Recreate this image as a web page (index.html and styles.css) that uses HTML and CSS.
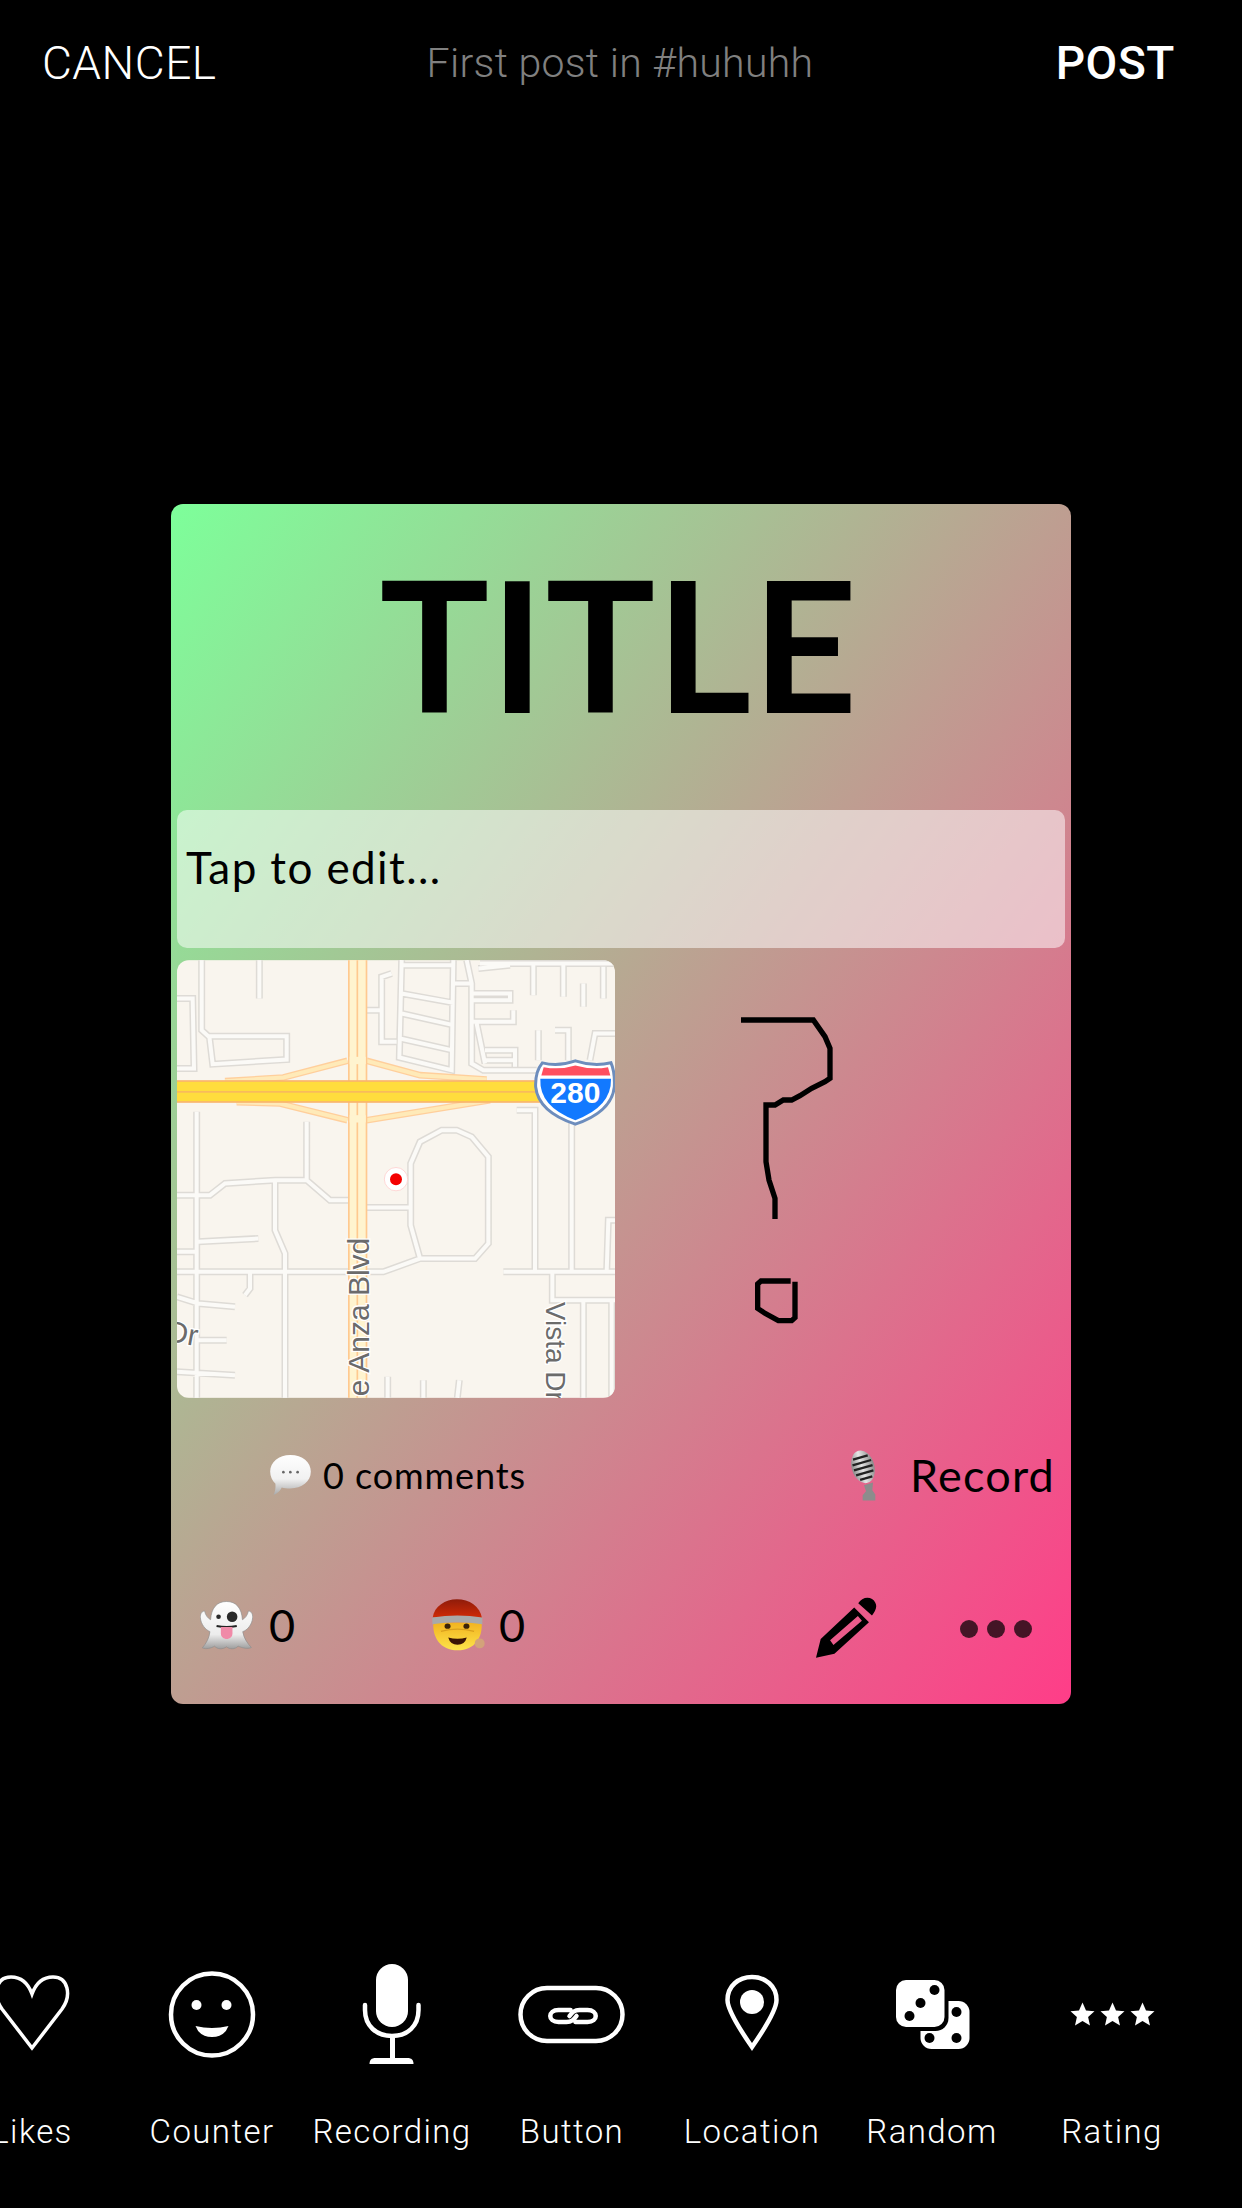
FILE: index.html
```html
<!DOCTYPE html>
<html lang="en">
<head>
<meta charset="utf-8">
<title>First post</title>
<link rel="stylesheet" href="styles.css">
</head>
<body>
<header class="topbar">
  <span class="cancel">CANCEL</span>
  <span class="context">First post in #huhuhh</span>
  <span class="post">POST</span>
</header>

<main class="card">
  <h1 class="title">TITLE</h1>
  <div class="textbox">Tap to edit...</div>

  <div class="media">
    <svg class="map" viewBox="21 30 1314 1313" aria-label="Map">
      <defs>
        <path id="streets" d="M21 145H68L72 355H21M95 30V240L115 258H350V328L128 342L118 258M268 30V145M665 70L635 80V275H680M590 180H635M695 30L688 322L845 360L850 30M695 45H850M695 130L850 158M695 190L850 225M690 265L845 300M850 100H905M890 30L905 100V340L940 360H1100M925 55L1020 45M930 40H1335M1090 40V135M1180 40V140M1300 50V145M1240 100V170M905 130H1020V150H905M905 215H1030V180M920 220L945 340M945 300H1035V350M945 330H1035M1105 240V330M1155 240H1195V330M1260 330L1275 250H1335M80 485V1343M410 515V690L480 750H535M21 735H120L165 700L315 690H410M315 690V840L345 910V1343M85 875L265 865M21 905H85M21 965H640L750 925H915L955 880V620L905 560L860 540H815L750 575L722 640V825L750 925M590 772H725M240 965V1015L225 1035M21 1040L85 1060L195 1070M85 1170H170M21 1265L195 1275M1000 965H1335M1040 480H1095V965M1205 500V965M1335 810H1315L1310 965M1147 965V1050H1335M1240 1050V1343M1325 1050V1343M653 1280V1343M760 1290V1343M868 1290L862 1343"/>
        <path id="ramps" d="M165 393L340 382L532 332M590 332L750 375L950 388M200 456L330 460L532 510M590 510L960 450"/>
      </defs>
      <rect class="map-ground" x="21" y="30" width="1314" height="1313"/>
      <use href="#streets" class="street-edge"/>
      <use href="#streets" class="street-fill"/>
      <use href="#ramps" class="ramp-edge"/>
      <use href="#ramps" class="ramp-fill"/>
      <rect class="artery-edge" x="534" y="30" width="58" height="1313"/>
      <rect class="artery-fill" x="539" y="30" width="48" height="1313"/>
      <path class="artery-line" d="M562 30V1343"/>
      <rect class="highway-edge" x="21" y="390" width="1090" height="68"/>
      <rect class="highway-fill" x="21" y="395" width="1090" height="58"/>
      <path class="highway-line" d="M21 425H1110"/>
      <rect class="artery-fill" x="539" y="320" width="48" height="22"/>
      <rect class="artery-fill" x="539" y="495" width="48" height="22"/>
      <circle class="pin-halo" cx="678" cy="687" r="35"/>
      <circle class="pin-dot" cx="678" cy="687" r="18"/>
      <text class="map-label" transform="translate(598 1338) rotate(-90)">e Anza Blvd</text>
      <text class="map-label map-label-small" transform="translate(1128 1055) rotate(90)">Vista Dr</text>
      <text class="map-label" transform="translate(-15 1172) rotate(10)">Dr</text>
      <path class="shield-edge" d="M1117 338Q1165 350 1216 332Q1270 350 1323 338Q1335 365 1333 410Q1325 485 1216 522Q1105 485 1097 410Q1095 365 1117 338Z"/>
      <path class="shield-blue" d="M1111 386H1323Q1325 470 1216 510Q1107 470 1111 386Z"/>
      <path class="shield-red" d="M1121 351Q1170 360 1216 346Q1265 360 1314 351L1321 376H1114Z"/>
      <text class="shield-num" x="1216" y="460">280</text>
    </svg>

    <svg class="scribble" viewBox="-255 -60 1350 1314" aria-label="Drawing">
      <path d="M123 120H340L375 170L390 205V295L375 305L335 325L300 347L275 360H250L225 375H198V545L207 600L225 655V717"/>
      <path d="M272 903H183L173 912V985L195 1000L235 1022H275L285 1013V905"/>
    </svg>
  </div>

  <div class="actions">
    <div class="comments">
      <svg class="emoji-bubble" viewBox="300 105 123 121">
        <defs>
          <linearGradient id="bubbleShade" x1="0" y1="0" x2="0" y2="1">
            <stop offset="0" stop-color="#ffffff"/><stop offset=".6" stop-color="#f1f1f1"/><stop offset="1" stop-color="#a9a9a9"/>
          </linearGradient>
        </defs>
        <path fill="url(#bubbleShade)" d="M361 105C398 105 423 127 423 155C423 186 395 206 361 206C350 206 342 205 335 203C330 213 322 222 310 226C315 216 317 206 316 192C306 183 300 170 300 155C300 127 326 105 361 105Z"/>
        <circle class="bubble-dot" cx="340" cy="157" r="4"/><circle class="bubble-dot" cx="361" cy="157" r="4"/><circle class="bubble-dot" cx="383" cy="157" r="4"/>
      </svg>
      <span class="comment-text">0 comments</span>
    </div>
    <div class="record">
      <svg class="emoji-mic" viewBox="213 85 87 152">
        <defs>
          <linearGradient id="micMetal" x1="0" y1="0" x2="1" y2="0">
            <stop offset="0" stop-color="#8a8a8a"/><stop offset=".45" stop-color="#e6e6e6"/><stop offset="1" stop-color="#8a8a8a"/>
          </linearGradient>
        </defs>
        <path fill="#8c8c8c" d="M258 190L285 182L283 205L292 218V236H254V220L264 208Z"/>
        <g transform="rotate(-16 255 135)">
          <ellipse fill="url(#micMetal)" cx="255" cy="135" rx="34" ry="50"/>
          <path class="mic-bars" d="M232 106H278M226 122H284M226 138H284M228 154H282M236 170H274"/>
        </g>
      </svg>
      <span class="record-text">Record</span>
    </div>
  </div>

  <div class="footer">
    <svg class="emoji-ghost" viewBox="90 540 160 147">
      <defs>
        <linearGradient id="ghostShade" x1="0" y1="0" x2="0" y2="1">
          <stop offset="0" stop-color="#ffffff"/><stop offset=".7" stop-color="#ececec"/><stop offset="1" stop-color="#9e9e9e"/>
        </linearGradient>
      </defs>
      <path fill="url(#ghostShade)" stroke="#8d8d8d" stroke-width="2" d="M170 541C200 541 216 562 218 596C226 592 234 582 236 570C244 570 250 578 249 590C247 612 232 628 219 632C222 652 234 668 245 680C232 686 216 680 205 676C195 686 180 686 170 678C158 686 144 686 134 676C124 682 108 686 97 681C108 668 118 652 120 632C106 626 93 610 91 590C90 578 96 570 104 570C106 582 114 592 122 596C124 562 140 541 170 541Z"/>
      <circle class="ghost-eye" cx="146" cy="587" r="7"/>
      <circle class="ghost-eye" cx="187" cy="587" r="16"/>
      <path class="ghost-mouth" d="M140 615Q170 621 201 615"/>
      <path class="ghost-tongue" d="M153 618H188V638C188 660 153 660 153 638Z"/>
    </svg>
    <span class="count count-ghost">0</span>
    <svg class="emoji-santa" viewBox="785 535 160 155">
      <defs>
        <linearGradient id="santaHat" x1="0" y1="0" x2="0" y2="1">
          <stop offset="0" stop-color="#8f1c0a"/><stop offset="1" stop-color="#d22a05"/>
        </linearGradient>
        <linearGradient id="santaFace" x1="0" y1="0" x2="0" y2="1">
          <stop offset="0" stop-color="#f2b320"/><stop offset="1" stop-color="#fde44a"/>
        </linearGradient>
      </defs>
      <path fill="url(#santaFace)" d="M789 605H935C938 650 915 689 862 689C810 689 786 650 789 605Z"/>
      <path fill="url(#santaHat)" d="M787 590C792 556 825 535 860 535C898 535 930 556 936 592Z"/>
      <path fill="#a9a9a9" d="M786 590Q862 578 937 590V610Q862 598 786 610Z"/>
      <ellipse class="santa-eye" cx="832" cy="616" rx="9" ry="8"/>
      <ellipse class="santa-eye" cx="889" cy="616" rx="9" ry="8"/>
      <path class="santa-brow" d="M812 632Q862 618 912 632"/>
      <path class="santa-mouth" d="M834 650Q862 658 890 650Q884 672 862 672Q840 672 834 650Z"/>
      <circle class="santa-pom" cx="929" cy="668" r="15"/>
    </svg>
    <span class="count count-santa">0</span>
    <svg class="pencil" viewBox="105 535 185 185">
      <path fill-rule="evenodd" d="M108 716L122 660L222 566L266 610L163 704ZM150 664L160 678L245 606L233 592Z"/>
      <path d="M234 554C246 532 276 532 285 552C292 566 284 578 275 590Z"/>
    </svg>
    <div class="dots"><i></i><i></i><i></i></div>
  </div>
</main>

<nav class="tray">
  <div class="tool">
    <svg class="tool-icon" viewBox="-38 1960 140 106">
      <path class="line" d="M32 2047L2 2008C-8 1994 -4 1976 11 1976C21 1976 28 1982 32 1993C36 1982 43 1976 53 1976C68 1976 72 1994 62 2008Z"/>
    </svg>
    <span>Likes</span>
  </div>
  <div class="tool">
    <svg class="tool-icon" viewBox="142.5 1960 140 106">
      <circle class="line thick" cx="212.5" cy="2013.5" r="41"/>
      <circle class="solid" cx="197" cy="2004" r="5"/>
      <circle class="solid" cx="227" cy="2004" r="5"/>
      <path class="solid" d="M196 2025Q212.500 2029 229 2025Q225 2036 212.500 2036Q200 2036 196 2025Z"/>
    </svg>
    <span>Counter</span>
  </div>
  <div class="tool">
    <svg class="tool-icon" viewBox="322.500 1960 140 106">
      <rect class="solid" x="376.500" y="1963" width="32" height="63" rx="16"/>
      <path class="line thick" stroke-linecap="round" d="M365.500 2004V2009C365.500 2025 377 2035 392.500 2035C408 2035 419 2025 419 2009V2004"/>
      <rect class="solid" x="390.500" y="2035" width="5" height="24"/>
      <path class="solid" d="M370 2063C370 2059 372 2057 376 2057H408C412 2057 414 2059 414 2063Z"/>
    </svg>
    <span>Recording</span>
  </div>
  <div class="tool">
    <svg class="tool-icon" viewBox="502.500 1960 140 106">
      <rect class="line thick" x="521" y="1987" width="102" height="53" rx="26.500"/>
      <path class="line thick" stroke-linecap="round" d="M571 2009H559C548 2009 548 2021 559 2021H567C572 2021 574 2019 577 2015M576 2021H588C599 2021 599 2009 588 2009H580C575 2009 573 2011 570 2015"/>
    </svg>
    <span>Button</span>
  </div>
  <div class="tool">
    <svg class="tool-icon" viewBox="682.500 1960 140 106">
      <path class="line thick" d="M752.500 2046C740 2028 728 2008 728 1999C728 1985 739 1976 752.500 1976C766 1976 777 1985 777 1999C777 2008 765 2028 752.500 2046Z"/>
      <circle class="solid" cx="752.500" cy="2001" r="12"/>
    </svg>
    <span>Location</span>
  </div>
  <div class="tool">
    <svg class="tool-icon" viewBox="862.500 1960 140 106">
      <rect class="solid" x="921" y="2000" width="49" height="48" rx="11"/>
      <rect class="die-gap" x="892.500" y="1975" width="56.500" height="55" rx="13"/>
      <rect class="solid" x="896.500" y="1979" width="48.500" height="47" rx="10"/>
      <circle class="pip" cx="935" cy="1989" r="5"/><circle class="pip" cx="921" cy="2002" r="5"/><circle class="pip" cx="910" cy="2015" r="5"/>
      <circle class="pip" cx="957" cy="2011" r="5"/><circle class="pip" cx="930" cy="2037" r="5"/><circle class="pip" cx="957" cy="2037" r="5"/>
    </svg>
    <span>Random</span>
  </div>
  <div class="tool">
    <svg class="tool-icon" viewBox="1042.500 1960 140 106">
      <path id="star" class="solid" d="M1083 2001.500L1086.500 2009.500L1095 2010.300L1088.600 2016L1090.500 2024.500L1083 2020L1075.500 2024.500L1077.400 2016L1071 2010.300L1079.500 2009.500Z"/>
      <use href="#star" x="30"/>
      <use href="#star" x="60"/>
    </svg>
    <span>Rating</span>
  </div>
</nav>
</body>
</html>
```

FILE: styles.css
```css
* { box-sizing: border-box; }

html, body { margin: 0; padding: 0; }

body {
  width: 1242px;
  height: 2208px;
  overflow: hidden;
  background: #000;
  color: #000;
  font-family: "Lato", sans-serif;
}

/* Top bar */
.topbar {
  height: 126px;
  padding: 0 67px 0 42px;
  display: grid;
  grid-template-columns: 1fr auto 1fr;
  align-items: center;
  font-family: "Roboto", sans-serif;
  font-size: 46px;
  color: #fff;
}
.cancel { font-weight: 300; letter-spacing: 0.5px; }
.context { font-weight: 300; font-size: 41px; letter-spacing: 0.3px; color: #808080; margin-left: 23px; }
.post { font-weight: 500; text-align: right; letter-spacing: 0.6px; }

/* Card */
.card {
  width: 900px;
  height: 1200px;
  margin: 378px 0 0 171px;
  padding: 0 6px;
  border-radius: 12px;
  background: linear-gradient(to bottom right, #7dff9a, #ff3d88);
}
.title {
  margin: 0;
  height: 306px;
  padding-top: 22px;
  text-align: center;
  font-size: 183px;
  line-height: 232px;
  font-weight: 700;
  letter-spacing: 1px;
  transform: translateX(-2px);
}
.textbox {
  height: 138px;
  padding: 30px 9px 0;
  border-radius: 10px;
  background: rgba(255, 255, 255, 0.52);
  font-size: 44px;
  line-height: 54px;
  letter-spacing: 1.4px;
}

/* Map and drawing */
.media {
  margin-top: 12px;
  display: flex;
  height: 438px;
}
.map { width: 438px; height: 438px; border-radius: 12px; display: block; }
.scribble { width: 450px; height: 438px; display: block; }
.scribble path { fill: none; stroke: #000; stroke-width: 16; }

.map-ground { fill: #f9f5ee; }
.street-edge { fill: none; stroke: #dedbd6; stroke-width: 21; }
.street-fill { fill: none; stroke: #fbfaf7; stroke-width: 12; }
.ramp-edge { fill: none; stroke: #ffcf9c; stroke-width: 20; }
.ramp-fill { fill: none; stroke: #ffeab8; stroke-width: 12; }
.artery-edge { fill: #ffc98f; }
.artery-fill { fill: #fff4cf; }
.artery-line { fill: none; stroke: #ffc98f; stroke-width: 5; }
.highway-edge { fill: #f9b56f; }
.highway-fill { fill: #ffdd3d; }
.highway-line { fill: none; stroke: #f8bb5c; stroke-width: 5; }
.pin-halo { fill: #fff; stroke: #ffb3b3; stroke-width: 1.5; }
.pin-dot { fill: #f40000; }
.map-label {
  font-family: "Liberation Sans", sans-serif;
  font-size: 90px;
  fill: #6b6b6b;
  stroke: #fff;
  stroke-width: 8;
  paint-order: stroke;
}
.map-label-small { font-size: 84px; }
.shield-edge { fill: #fff; stroke: #6d8dbd; stroke-width: 9; }
.shield-blue { fill: #1279ff; }
.shield-red { fill: #ff4f60; }
.shield-num {
  font-family: "Liberation Sans", sans-serif;
  font-size: 90px;
  font-weight: 700;
  fill: #fff;
  text-anchor: middle;
}

/* Comments and record */
.actions {
  height: 154px;
  display: flex;
  align-items: center;
  justify-content: space-between;
  padding: 0 10px 0 93px;
}
.comments { display: flex; align-items: center; gap: 12px; }
.comment-text { font-size: 36px; line-height: 44px; letter-spacing: 0.9px; }
.emoji-bubble { width: 41px; height: 40px; display: block; }
.record { display: flex; align-items: center; gap: 32px; }
.record-text { font-size: 45px; line-height: 54px; letter-spacing: 1.2px; }
.emoji-mic { width: 29px; height: 51px; display: block; }
.bubble-dot { fill: #666; }
.mic-bars { fill: none; stroke: #222; stroke-width: 7; }

/* Bottom row */
.footer {
  height: 146px;
  display: flex;
  align-items: center;
  padding-left: 23px;
}
.emoji-ghost { width: 53px; height: 49px; display: block; }
.emoji-santa { width: 53px; height: 52px; display: block; }
.ghost-eye { fill: #2a2a2a; }
.ghost-mouth { fill: none; stroke: #222; stroke-width: 6; }
.ghost-tongue { fill: #f08aa8; }
.santa-eye { fill: #3b2308; }
.santa-brow { fill: none; stroke: #d9a01e; stroke-width: 4; }
.santa-mouth { fill: #3a1405; }
.santa-pom { fill: #d3a27a; }
.count { font-size: 45px; line-height: 56px; }
.count-ghost { margin-left: 16px; width: 163px; }
.count-santa { margin-left: 14px; width: 316px; }
.pencil { width: 62px; height: 62px; display: block; margin-top: 6px; }
.dots { display: flex; gap: 9px; margin-left: 83px; margin-top: 8px; }
.dots i { width: 18px; height: 18px; border-radius: 50%; background: rgba(0, 0, 0, 0.72); }

/* Tool tray */
.tray {
  margin: 257px 0 0 -58px;
  display: flex;
  color: #fff;
  font-family: "Roboto", sans-serif;
  font-weight: 300;
  font-size: 33px;
  letter-spacing: 1.4px;
}
.tool {
  flex: 0 0 180px;
  display: flex;
  flex-direction: column;
  align-items: center;
  gap: 45px;
}
.tool-icon { width: 140px; height: 106px; display: block; overflow: visible; }
.line { fill: none; stroke: #fff; stroke-width: 3.500; }
.thick { stroke-width: 4.500; }
.solid { fill: #fff; }
.pip { fill: #000; }
.die-gap { fill: #000; }
```
